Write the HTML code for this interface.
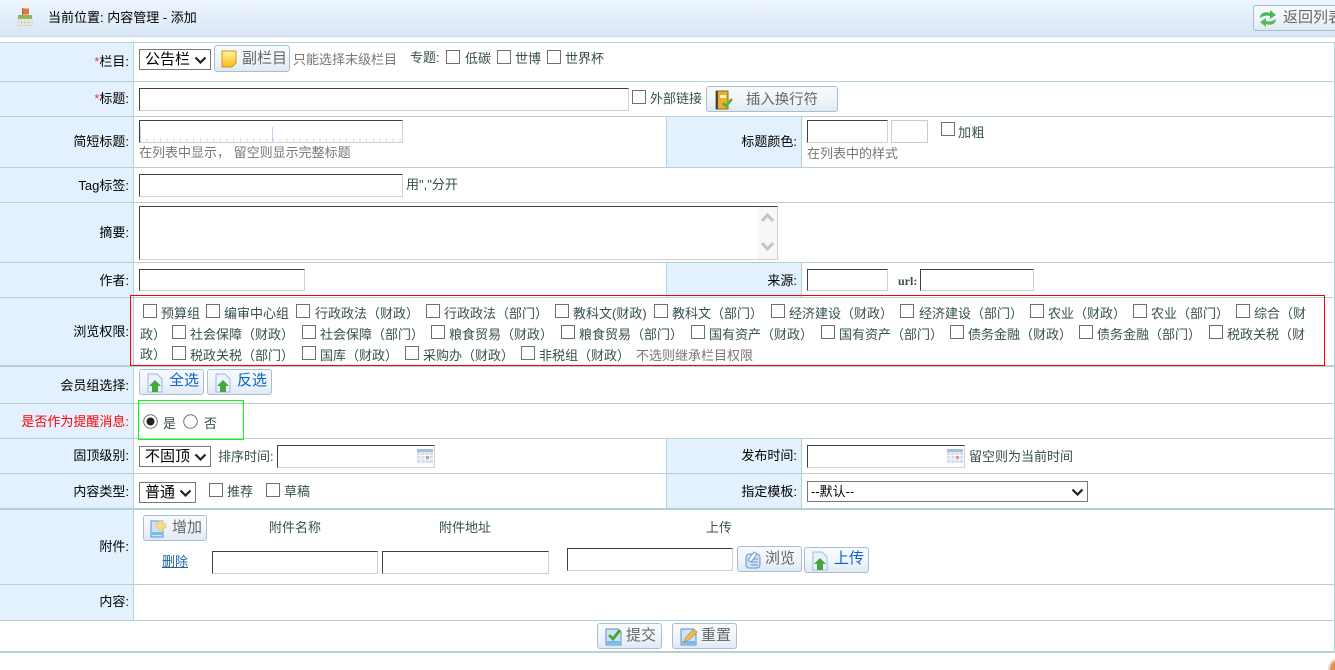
<!DOCTYPE html>
<html lang="zh-CN"><head><meta charset="utf-8"><title>内容管理 - 添加</title>
<style>
html,body{margin:0;padding:0;background:#fff;width:1335px;height:670px;overflow:hidden}
body{position:relative;font-family:"Liberation Sans","WenQuanYi Zen Hei","Noto Sans CJK SC",sans-serif;font-size:13px;color:#36504f}
.a,.t,.l,.r,.hl,.vl,.bg,.in,.cb,.btn,select{position:absolute}
.t,.l,.r{white-space:nowrap;line-height:16px;height:16px}
.l,.r{color:#000;text-align:right}
.l{right:1206px}.r{right:538px}
.g{color:#777}
.hl{left:0;width:1335px;height:1px;background:#b4d1d4}
.hl.k{height:2px}
.vl{width:1px;background:#b4d1d4}
.bg{background:#e3f0fd}
.in{box-sizing:border-box;background:#fff;border:1px solid #d4d0c8;border-top-color:#404040;border-left-color:#404040;padding:0;margin:0;border-radius:0;outline:0}
.cb{appearance:none;-webkit-appearance:none;box-sizing:border-box;width:14px;height:14px;margin:0;padding:0;border:1px solid #707070;background:#fff;border-radius:0}
select{appearance:none;-webkit-appearance:none;box-sizing:border-box;margin:0;background:#fff;border:1px solid #767676;border-radius:0;font-family:inherit;font-size:15px;color:#000;padding:0 0 0 5px;outline:0}
.chev{position:absolute;pointer-events:none}
.btn{box-sizing:border-box;display:block;border:1px solid #a9bfd1;border-radius:3px;background:linear-gradient(#f6fafe 0,#f1f6fb 50%,#dfe9f4 100%);color:#666;font-family:inherit;font-size:15px;line-height:22px;padding:0;margin:0;white-space:nowrap;text-align:left}
.btn svg{position:absolute}
.btn span{position:absolute;top:1px;white-space:nowrap}
.blue{color:#0a62c9}
a{color:#1c62a8;text-decoration:underline}
</style></head><body>

<div class="a" style="left:0;top:0;width:1335px;height:37px;background:linear-gradient(#edf6fe,#dae6f5);border-bottom:1px solid #c8daee;box-sizing:border-box"></div>
<svg class="a" style="left:17px;top:8px" width="16" height="18" viewBox="0 0 16 18"><path d="M5.500 0v7" stroke="#a06a30" fill="none"/><path d="M6 0.500h6v6H6z" fill="#e8743a"/><rect x="1" y="7" width="14" height="4" fill="#86b95a"/><rect x="1" y="11" width="14" height="6.500" fill="#efefe8" stroke="#c2c2b8" stroke-width=".6"/><path d="M4.500 12v5M8 12v5M11.500 12v5M2 14.500h12" stroke="#c6c6bc" stroke-width=".7"/></svg>
<div class="t" style="left:48px;top:10px;color:#000">当前位置: 内容管理 - 添加</div>
<div class="btn" style="left:1253px;top:5px;width:100px;height:26px">
<svg style="left:4px;top:3px" width="20" height="19" viewBox="0 0 20 19"><path d="M2 9C2 4 7 2 12 4V1l6 5-6 4V7C8 6 5 7 2 9z" fill="#4fb552"/><path d="M18 10c0 5-5 7-10 5v3l-6-5 6-4v3c4 1 7 0 10-2z" fill="#58bb5a"/></svg>
<span style="left:29px">返回列表</span></div>

<!-- table background -->
<div class="bg" style="left:0;top:42px;width:133px;height:578px"></div>
<div class="bg" style="left:667px;top:116px;width:134px;height:51px"></div>
<div class="bg" style="left:667px;top:262px;width:134px;height:35px"></div>
<div class="bg" style="left:667px;top:438px;width:134px;height:71px"></div>

<div class="hl" style="top:42px"></div><div class="hl" style="top:81px"></div><div class="hl" style="top:116px"></div>
<div class="hl" style="top:167px"></div><div class="hl" style="top:202px"></div><div class="hl" style="top:262px"></div>
<div class="hl" style="top:297px"></div><div class="hl k" style="top:365px"></div><div class="hl" style="top:403px"></div>
<div class="hl" style="top:438px"></div><div class="hl" style="top:473px"></div><div class="hl k" style="top:508px"></div>
<div class="hl" style="top:584px"></div><div class="hl" style="top:620px"></div><div class="hl k" style="top:651px"></div>
<div class="vl" style="left:133px;top:42px;height:578px"></div>
<div class="vl" style="left:1334px;top:42px;height:611px"></div>
<div class="vl" style="left:666px;top:116px;height:51px"></div><div class="vl" style="left:801px;top:116px;height:51px"></div>
<div class="vl" style="left:666px;top:262px;height:35px"></div><div class="vl" style="left:801px;top:262px;height:35px"></div>
<div class="vl" style="left:666px;top:438px;height:71px"></div><div class="vl" style="left:801px;top:438px;height:71px"></div>

<!-- labels -->
<div class="l" style="top:54px"><span style="color:#e8304a">*</span>栏目:</div>
<div class="l" style="top:91px"><span style="color:#e8304a">*</span>标题:</div>
<div class="l" style="top:134px">简短标题:</div>
<div class="l" style="top:178px">Tag标签:</div>
<div class="l" style="top:225px">摘要:</div>
<div class="l" style="top:273px">作者:</div>
<div class="l" style="top:324px">浏览权限:</div>
<div class="l" style="top:378px">会员组选择:</div>
<div class="l" style="top:414px;color:#f00">是否作为提醒消息:</div>
<div class="l" style="top:448px">固顶级别:</div>
<div class="l" style="top:484px">内容类型:</div>
<div class="l" style="top:539px">附件:</div>
<div class="l" style="top:594px">内容:</div>
<div class="r" style="top:134px">标题颜色:</div>
<div class="r" style="top:273px">来源:</div>
<div class="r" style="top:448px">发布时间:</div>
<div class="r" style="top:484px">指定模板:</div>

<!-- row 1 -->
<select style="left:139px;top:49px;width:72px;height:21px"><option>公告栏</option></select>
<svg class="chev" style="left:194px;top:56px" width="13" height="8" viewBox="0 0 13 8"><path d="M1.500 1.500l5 5 5-5" stroke="#222" stroke-width="2.200" fill="none"/></svg>
<div class="btn" style="left:214px;top:45px;width:76px;height:27px">
<svg style="left:5px;top:4px" width="18" height="18" viewBox="0 0 18 18"><defs><linearGradient id="y" x1="0" y1="0" x2="0" y2="1"><stop offset="0" stop-color="#fff2a0"/><stop offset="1" stop-color="#f8bd10"/></linearGradient></defs><path d="M2 1h13a1 1 0 0 1 1 1v11l-4 4H3a1 1 0 0 1-1-1z" fill="url(#y)" stroke="#c9961e"/></svg>
<span style="left:27px;top:2px">副栏目</span></div>
<div class="t g" style="left:293px;top:52px">只能选择末级栏目</div>
<div class="t" style="left:410px;top:50px">专题:</div>
<input class="cb" type="checkbox" style="left:446px;top:50px"><div class="t" style="left:465px;top:51px">低碳</div>
<input class="cb" type="checkbox" style="left:497px;top:50px"><div class="t" style="left:515px;top:51px">世博</div>
<input class="cb" type="checkbox" style="left:547px;top:50px"><div class="t" style="left:565px;top:51px">世界杯</div>

<!-- row 2 -->
<input class="in" style="left:139px;top:88px;width:490px;height:23px">
<input class="cb" type="checkbox" style="left:632px;top:90px"><div class="t" style="left:650px;top:91px">外部链接</div>
<div class="btn" style="left:706px;top:86px;width:132px;height:26px">
<svg style="left:7px;top:3px" width="20" height="20" viewBox="0 0 20 20"><rect x="2" y="1" width="12" height="18" fill="#e8b32a" stroke="#8a6a1c"/><rect x="2" y="1" width="2" height="18" fill="#444"/><rect x="6" y="5" width="6" height="3" fill="#fff3b8"/><path d="M9 13l3 3 6-7" stroke="#4db33d" stroke-width="2.500" fill="none"/></svg>
<span style="left:39px;top:2px;font-size:14.400px">插入换行符</span></div>

<!-- row 3 -->
<input class="in" style="left:139px;top:120px;width:264px;height:23px;background:#fff repeating-linear-gradient(90deg,#d4dff5 0 1px,#fff 1px 6.650px) 0 100%/100% 4px no-repeat">
<div class="a" style="left:272px;top:127px;width:1px;height:15px;background:#c4d2f0"></div>
<div class="a" style="left:140px;top:127px;width:1px;height:15px;background:#c4d2f0"></div>
<div class="t g" style="left:139px;top:145px">在列表中显示，  留空则显示完整标题</div>
<input class="in" style="left:807px;top:120px;width:81px;height:23px">
<input class="in" style="left:891px;top:120px;width:37px;height:23px;border-color:#ccc">
<input class="cb" type="checkbox" style="left:941px;top:122px"><div class="t" style="left:958px;top:125px;letter-spacing:.5px">加粗</div>
<div class="t g" style="left:807px;top:146px">在列表中的样式</div>

<!-- tag -->
<input class="in" style="left:139px;top:174px;width:264px;height:23px">
<div class="t" style="left:406px;top:177px">用","分开</div>

<!-- abstract -->
<div class="in" style="left:139px;top:206px;width:639px;height:54px">
<div class="a" style="right:0;top:0;width:19px;height:52px;background:#f7f7f7"></div>
<svg class="a" style="right:1px;top:3px" width="17" height="46" viewBox="0 0 17 46"><path d="M3 11l5.500-6L14 11" stroke="#c4c4c4" stroke-width="3" fill="none"/><path d="M3 33l5.500 6L14 33" stroke="#c4c4c4" stroke-width="3" fill="none"/></svg>
</div>

<!-- author -->
<input class="in" style="left:139px;top:269px;width:166px;height:22px">
<input class="in" style="left:807px;top:269px;width:81px;height:22px">
<div class="t" style="left:898px;top:273px;font-family:'Liberation Serif',serif;font-size:12px;font-weight:bold">url:</div>
<input class="in" style="left:920px;top:269px;width:114px;height:22px">

<!-- permissions -->
<div class="a" style="left:130px;top:295px;width:1195px;height:71px;box-sizing:border-box;border:1px solid #f00"></div>
<input class="cb" type="checkbox" style="left:143px;top:304px"><div class="t" style="left:161px;top:306px">预算组</div>
<input class="cb" type="checkbox" style="left:206px;top:304px"><div class="t" style="left:224px;top:306px">编审中心组</div>
<input class="cb" type="checkbox" style="left:296px;top:304px"><div class="t" style="left:315px;top:306px">行政政法（财政）</div>
<input class="cb" type="checkbox" style="left:426px;top:304px"><div class="t" style="left:444px;top:306px">行政政法（部门）</div>
<input class="cb" type="checkbox" style="left:555px;top:304px"><div class="t" style="left:573px;top:306px">教科文(财政)</div>
<input class="cb" type="checkbox" style="left:654px;top:304px"><div class="t" style="left:672px;top:306px">教科文（部门）</div>
<input class="cb" type="checkbox" style="left:771px;top:304px"><div class="t" style="left:789px;top:306px">经济建设（财政）</div>
<input class="cb" type="checkbox" style="left:900px;top:304px"><div class="t" style="left:919px;top:306px">经济建设（部门）</div>
<input class="cb" type="checkbox" style="left:1030px;top:304px"><div class="t" style="left:1048px;top:306px">农业（财政）</div>
<input class="cb" type="checkbox" style="left:1133px;top:304px"><div class="t" style="left:1151px;top:306px">农业（部门）</div>
<input class="cb" type="checkbox" style="left:1236px;top:304px"><div class="t" style="left:1254px;top:306px">综合（财</div>
<div class="t" style="left:140px;top:327px">政）</div>
<input class="cb" type="checkbox" style="left:172px;top:325px"><div class="t" style="left:190px;top:327px">社会保障（财政）</div>
<input class="cb" type="checkbox" style="left:302px;top:325px"><div class="t" style="left:320px;top:327px">社会保障（部门）</div>
<input class="cb" type="checkbox" style="left:431px;top:325px"><div class="t" style="left:449px;top:327px">粮食贸易（财政）</div>
<input class="cb" type="checkbox" style="left:561px;top:325px"><div class="t" style="left:579px;top:327px">粮食贸易（部门）</div>
<input class="cb" type="checkbox" style="left:691px;top:325px"><div class="t" style="left:709px;top:327px">国有资产（财政）</div>
<input class="cb" type="checkbox" style="left:821px;top:325px"><div class="t" style="left:839px;top:327px">国有资产（部门）</div>
<input class="cb" type="checkbox" style="left:950px;top:325px"><div class="t" style="left:968px;top:327px">债务金融（财政）</div>
<input class="cb" type="checkbox" style="left:1079px;top:325px"><div class="t" style="left:1097px;top:327px">债务金融（部门）</div>
<input class="cb" type="checkbox" style="left:1209px;top:325px"><div class="t" style="left:1227px;top:327px">税政关税（财</div>
<div class="t" style="left:140px;top:347px">政）</div>
<input class="cb" type="checkbox" style="left:172px;top:346px"><div class="t" style="left:190px;top:348px">税政关税（部门）</div>
<input class="cb" type="checkbox" style="left:302px;top:346px"><div class="t" style="left:320px;top:348px">国库（财政）</div>
<input class="cb" type="checkbox" style="left:405px;top:346px"><div class="t" style="left:423px;top:348px">采购办（财政）</div>
<input class="cb" type="checkbox" style="left:521px;top:346px"><div class="t" style="left:539px;top:348px">非税组（财政）</div>
<div class="t g" style="left:636px;top:348px">不选则继承栏目权限</div>

<!-- member group -->
<div class="btn blue" style="left:139px;top:369px;width:65px;height:26px">
<svg style="left:6px;top:3px" width="18" height="20" viewBox="0 0 18 20"><path d="M2 1h9l5 5v13H2z" fill="#eaf2fb" stroke="#9dbbdc"/><path d="M9 7l6 6h-3v6H6v-6H3z" fill="#45a83c"/></svg>
<span style="left:29px;top:0;color:#0a62c9">全选</span></div>
<div class="btn blue" style="left:207px;top:369px;width:65px;height:26px">
<svg style="left:6px;top:3px" width="18" height="20" viewBox="0 0 18 20"><path d="M2 1h9l5 5v13H2z" fill="#eaf2fb" stroke="#9dbbdc"/><path d="M9 7l6 6h-3v6H6v-6H3z" fill="#45a83c"/></svg>
<span style="left:29px;top:0;color:#0a62c9">反选</span></div>

<!-- reminder -->
<div class="a" style="left:138px;top:400px;width:106px;height:40px;box-sizing:border-box;border:1px solid #0f0"></div>
<svg class="a" style="left:143px;top:414px" width="15" height="15" viewBox="0 0 15 15"><circle cx="7.500" cy="7.500" r="6.800" fill="#fff" stroke="#707070"/><circle cx="7.500" cy="7.500" r="4" fill="#222"/></svg>
<div class="t" style="left:163px;top:416px">是</div>
<svg class="a" style="left:183px;top:414px" width="15" height="15" viewBox="0 0 15 15"><circle cx="7.500" cy="7.500" r="6.800" fill="#fff" stroke="#707070"/></svg>
<div class="t" style="left:204px;top:416px">否</div>

<!-- pin -->
<select style="left:139px;top:446px;width:72px;height:21px"><option>不固顶</option></select>
<svg class="chev" style="left:194px;top:453px" width="13" height="8" viewBox="0 0 13 8"><path d="M1.500 1.500l5 5 5-5" stroke="#222" stroke-width="2.200" fill="none"/></svg>
<div class="t" style="left:218px;top:449px">排序时间:</div>
<input class="in" style="left:277px;top:445px;width:158px;height:23px">
<svg class="a" style="left:417px;top:449px" width="16" height="14" viewBox="0 0 16 14"><rect x="0" y="0" width="16" height="14" fill="#d5e0ee"/><rect x="0" y="0" width="16" height="3" fill="#a9bedb"/><path d="M4 3v11M8 3v11M12 3v11M0 6.500h16M0 10h16" stroke="#fff" stroke-width=".8"/><rect x="9" y="7" width="3" height="3" fill="#e79a8c"/></svg>
<input class="in" style="left:807px;top:445px;width:158px;height:23px">
<svg class="a" style="left:947px;top:449px" width="16" height="14" viewBox="0 0 16 14"><rect x="0" y="0" width="16" height="14" fill="#d5e0ee"/><rect x="0" y="0" width="16" height="3" fill="#a9bedb"/><path d="M4 3v11M8 3v11M12 3v11M0 6.500h16M0 10h16" stroke="#fff" stroke-width=".8"/><rect x="9" y="7" width="3" height="3" fill="#e79a8c"/></svg>
<div class="t" style="left:969px;top:449px">留空则为当前时间</div>

<!-- content type -->
<select style="left:139px;top:482px;width:57px;height:21px"><option>普通</option></select>
<svg class="chev" style="left:179px;top:489px" width="13" height="8" viewBox="0 0 13 8"><path d="M1.500 1.500l5 5 5-5" stroke="#222" stroke-width="2.200" fill="none"/></svg>
<input class="cb" type="checkbox" style="left:209px;top:483px"><div class="t" style="left:227px;top:484px">推荐</div>
<input class="cb" type="checkbox" style="left:266px;top:483px"><div class="t" style="left:284px;top:484px">草稿</div>
<select style="left:807px;top:481px;width:281px;height:21px;font-size:13px;padding-left:3px"><option>--默认--</option></select>
<svg class="chev" style="left:1071px;top:488px" width="13" height="8" viewBox="0 0 13 8"><path d="M1.500 1.500l5 5 5-5" stroke="#222" stroke-width="2.200" fill="none"/></svg>

<!-- attachment -->
<div class="btn" style="left:143px;top:515px;width:64px;height:26px">
<svg style="left:5px;top:3px" width="22" height="20" viewBox="0 0 22 20"><path d="M2 2h12v16H2z" fill="#cfe3f8" stroke="#5d8fca"/><rect x="3" y="13" width="10" height="3" fill="#6fbdf2"/><path d="M10 2h4v3h3v4h-3v3h-4V9H7V5h3z" fill="#f8dc8e" stroke="#e3bb6b" stroke-width=".6"/></svg>
<span style="left:28px;top:1px">增加</span></div>
<div class="t" style="left:269px;top:520px">附件名称</div>
<div class="t" style="left:439px;top:520px">附件地址</div>
<div class="t" style="left:706px;top:520px">上传</div>
<a class="t" style="left:162px;top:554px" href="#">删除</a>
<input class="in" style="left:212px;top:551px;width:166px;height:23px">
<input class="in" style="left:382px;top:551px;width:167px;height:23px">
<input class="in" style="left:567px;top:548px;width:166px;height:23px">
<div class="btn" style="left:737px;top:546px;width:65px;height:26px">
<svg style="left:6px;top:3px" width="18" height="20" viewBox="0 0 18 20"><rect x="2" y="4" width="14" height="14" rx="3" fill="#cfe1f4" stroke="#6d97c9"/><path d="M7 9h7M7 12h7M7 15h7" stroke="#6d97c9"/><path d="M4 10l6-8 3 2-6 8z" fill="#fff" stroke="#6d97c9"/></svg>
<span style="left:27px;top:1px">浏览</span></div>
<div class="btn" style="left:804px;top:547px;width:65px;height:26px">
<svg style="left:6px;top:3px" width="18" height="20" viewBox="0 0 18 20"><path d="M2 1h9l5 5v13H2z" fill="#eaf2fb" stroke="#9dbbdc"/><path d="M9 7l6 6h-3v6H6v-6H3z" fill="#45a83c"/></svg>
<span style="left:29px;top:0;color:#0a62c9">上传</span></div>

<!-- submit -->
<div class="btn" style="left:597px;top:623px;width:65px;height:26px">
<svg style="left:6px;top:3px" width="20" height="20" viewBox="0 0 20 20"><path d="M2 2h12l3 3v13H2z" fill="#cfe3f8" stroke="#5d8fca"/><rect x="3" y="14" width="13" height="3" fill="#6fbdf2"/><path d="M5 8l4 4 7-9" stroke="#4aa83a" stroke-width="3" fill="none"/></svg>
<span style="left:28px;top:1px">提交</span></div>
<div class="btn" style="left:672px;top:623px;width:65px;height:26px">
<svg style="left:6px;top:3px" width="20" height="20" viewBox="0 0 20 20"><path d="M2 2h12l3 3v13H2z" fill="#cfe3f8" stroke="#5d8fca"/><rect x="3" y="14" width="13" height="3" fill="#6fbdf2"/><path d="M5 15l2-5 8-8 3 3-8 8z" fill="#f3bb5e" stroke="#c7862e" stroke-width=".7"/></svg>
<span style="left:28px;top:1px">重置</span></div>

<!-- corner artefact -->
<svg class="a" style="left:1325px;top:655px" width="10" height="15" viewBox="0 0 10 15"><circle cx="14" cy="14" r="10" fill="#e89050" stroke="#ddd" stroke-width="2"/></svg>
</body></html>
